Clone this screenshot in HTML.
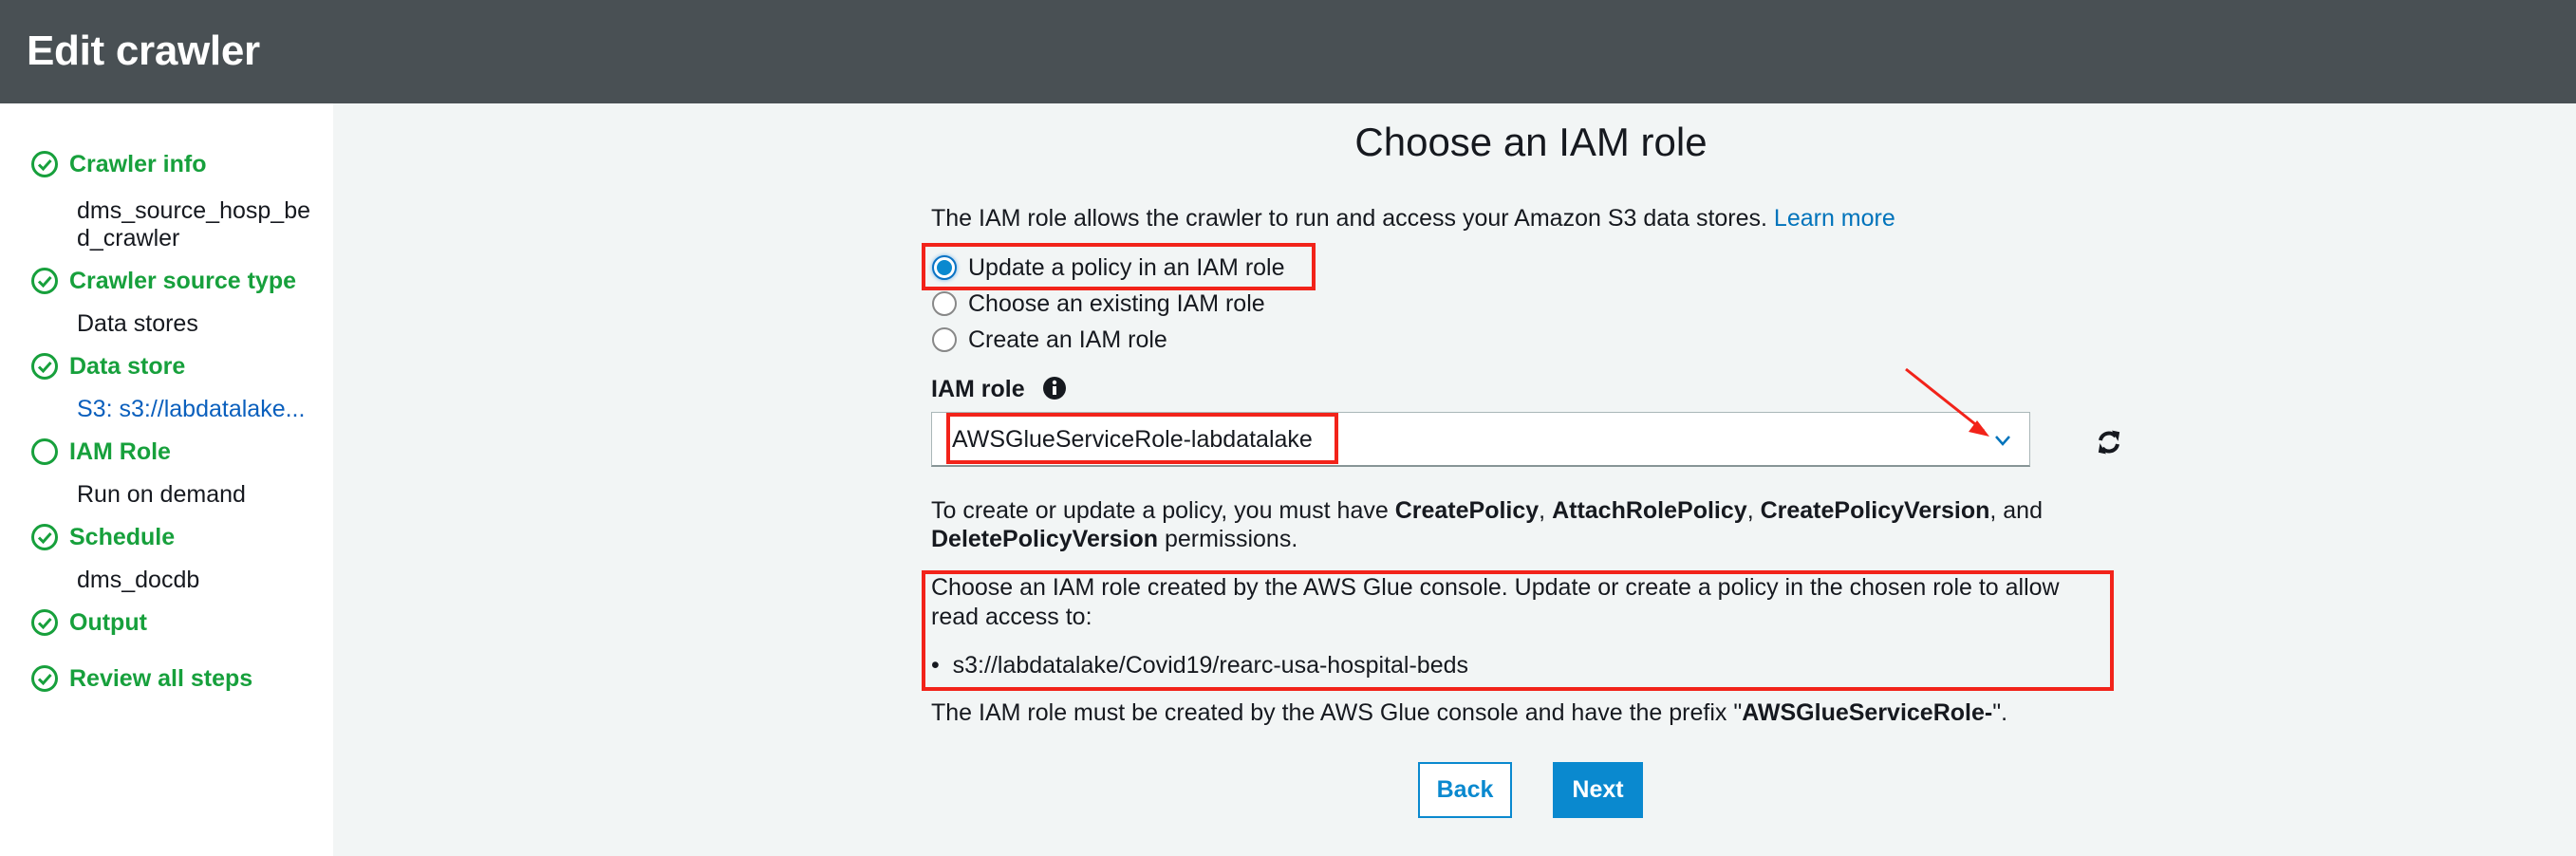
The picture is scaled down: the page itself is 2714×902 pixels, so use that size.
<!DOCTYPE html>
<html><head><meta charset="utf-8"><style>
*{margin:0;padding:0;box-sizing:border-box}
body{width:2714px;height:902px;overflow:hidden;font-family:"Liberation Sans",Arial,sans-serif;background:#f2f5f5;color:#16191f;position:relative}
.hdr{position:absolute;left:0;top:0;width:2714px;height:109px;background:#495054}
.hdr h1{position:absolute;left:28px;top:29px;font-size:44px;color:#fff;font-weight:bold;letter-spacing:-0.3px}
.side{position:absolute;left:0;top:109px;width:351px;height:793px;background:#fff}
.a{position:absolute;white-space:nowrap;font-size:25px;line-height:30px}
.g{color:#17a03c;font-weight:bold;left:73px}
.s{left:81px;color:#16191f}
.ic{position:absolute;left:32px;width:30px;height:30px}
.t{position:absolute;white-space:nowrap;font-size:25px;line-height:30px;left:981px}
b{font-weight:bold}
.rb{position:absolute;border:4px solid #f2231a}
.radio{position:absolute;left:982px;width:26px;height:26px;border-radius:50%;border:2px solid #888;background:#fff}
</style></head><body>
<div class="hdr"><h1>Edit crawler</h1></div>
<div class="side"></div>
<svg class="ic" style="top:158px" viewBox="0 0 30 30"><circle cx="15" cy="15" r="12.5" fill="none" stroke="#17a03c" stroke-width="3"/><path d="M9 15.5l4.5 4.5 8-9" fill="none" stroke="#17a03c" stroke-width="3"/></svg>
<div class="a g" style="top:158px">Crawler info</div>
<div class="a s" style="top:207px">dms_source_hosp_be</div>
<div class="a s" style="top:236px">d_crawler</div>
<svg class="ic" style="top:281px" viewBox="0 0 30 30"><circle cx="15" cy="15" r="12.5" fill="none" stroke="#17a03c" stroke-width="3"/><path d="M9 15.5l4.5 4.5 8-9" fill="none" stroke="#17a03c" stroke-width="3"/></svg>
<div class="a g" style="top:281px">Crawler source type</div>
<div class="a s" style="top:326px">Data stores</div>
<svg class="ic" style="top:371px" viewBox="0 0 30 30"><circle cx="15" cy="15" r="12.5" fill="none" stroke="#17a03c" stroke-width="3"/><path d="M9 15.5l4.5 4.5 8-9" fill="none" stroke="#17a03c" stroke-width="3"/></svg>
<div class="a g" style="top:371px">Data store</div>
<div class="a s" style="top:416px;color:#0a5fbd">S3: s3://labdatalake...</div>
<svg class="ic" style="top:461px" viewBox="0 0 30 30"><circle cx="15" cy="15" r="12.5" fill="none" stroke="#17a03c" stroke-width="3"/></svg>
<div class="a g" style="top:461px">IAM Role</div>
<div class="a s" style="top:506px">Run on demand</div>
<svg class="ic" style="top:551px" viewBox="0 0 30 30"><circle cx="15" cy="15" r="12.5" fill="none" stroke="#17a03c" stroke-width="3"/><path d="M9 15.5l4.5 4.5 8-9" fill="none" stroke="#17a03c" stroke-width="3"/></svg>
<div class="a g" style="top:551px">Schedule</div>
<div class="a s" style="top:596px">dms_docdb</div>
<svg class="ic" style="top:641px" viewBox="0 0 30 30"><circle cx="15" cy="15" r="12.5" fill="none" stroke="#17a03c" stroke-width="3"/><path d="M9 15.5l4.5 4.5 8-9" fill="none" stroke="#17a03c" stroke-width="3"/></svg>
<div class="a g" style="top:641px">Output</div>
<svg class="ic" style="top:700px" viewBox="0 0 30 30"><circle cx="15" cy="15" r="12.5" fill="none" stroke="#17a03c" stroke-width="3"/><path d="M9 15.5l4.5 4.5 8-9" fill="none" stroke="#17a03c" stroke-width="3"/></svg>
<div class="a g" style="top:700px">Review all steps</div>

<div style="position:absolute;left:1313px;width:600px;top:126px;text-align:center;font-size:42px;color:#16191f">Choose an IAM role</div>
<div class="t" style="top:215px">The IAM role allows the crawler to run and access your Amazon S3 data stores. <span style="color:#0073bb">Learn more</span></div>
<div class="radio" style="top:269px;border:2px solid #0a73c4;box-shadow:0 0 4px #6ab0e8"><div style="position:absolute;left:3px;top:3px;width:16px;height:16px;border-radius:50%;background:#0a89cf"></div></div>
<div class="t" style="top:267px;left:1020px">Update a policy in an IAM role</div>
<div class="rb" style="left:971px;top:256px;width:415px;height:50px"></div>
<div class="radio" style="top:307px"></div>
<div class="t" style="top:305px;left:1020px">Choose an existing IAM role</div>
<div class="radio" style="top:345px"></div>
<div class="t" style="top:343px;left:1020px">Create an IAM role</div>
<div class="t" style="top:395px;font-weight:bold">IAM role</div>
<svg style="position:absolute;left:1098px;top:396px" width="26" height="26" viewBox="0 0 26 26"><circle cx="13" cy="13" r="12" fill="#16191f"/><rect x="11" y="11" width="4" height="9" fill="#fff"/><circle cx="13" cy="7" r="2.2" fill="#fff"/></svg>
<div style="position:absolute;left:981px;top:434px;width:1158px;height:58px;background:#fff;border:1px solid #aab7b8;border-bottom:2px solid #879596"></div>
<div class="t" style="top:448px;left:1003px">AWSGlueServiceRole-labdatalake</div>
<div class="rb" style="left:997px;top:435px;width:413px;height:54px"></div>
<svg style="position:absolute;left:2100px;top:457px" width="20" height="14" viewBox="0 0 20 14"><path d="M3 3l7 8 7-8" fill="none" stroke="#0073bb" stroke-width="2.5"/></svg>
<svg style="position:absolute;left:2208px;top:452px" width="28" height="28" viewBox="0 0 28 28"><path d="M5 12A9 9 0 0 1 21 8M23 16A9 9 0 0 1 7 20" fill="none" stroke="#16191f" stroke-width="4"/><path d="M19 3l5 1-1 6z M9 25l-5-1 1-6z" fill="#16191f" stroke="#16191f" stroke-width="2"/></svg>
<svg style="position:absolute;left:2000px;top:380px" width="110" height="90"><line x1="8" y1="9" x2="90" y2="74" stroke="#f2231a" stroke-width="3"/><path d="M96 80l-22-5 9-12z" fill="#f2231a"/></svg>
<div class="t" style="top:523px">To create or update a policy, you must have <b>CreatePolicy</b>, <b>AttachRolePolicy</b>, <b>CreatePolicyVersion</b>, and</div>
<div class="t" style="top:553px"><b>DeletePolicyVersion</b> permissions.</div>
<div class="rb" style="left:971px;top:601px;width:1256px;height:127px"></div>
<div class="t" style="top:604px">Choose an IAM role created by the AWS Glue console. Update or create a policy in the chosen role to allow</div>
<div class="t" style="top:635px">read access to:</div>
<div class="t" style="top:686px">•&nbsp; s3://labdatalake/Covid19/rearc-usa-hospital-beds</div>
<div class="t" style="top:736px">The IAM role must be created by the AWS Glue console and have the prefix "<b>AWSGlueServiceRole-</b>".</div>
<div style="position:absolute;left:1494px;top:803px;width:99px;height:59px;border:2px solid #0a89cf;background:#fff;color:#0a89cf;font-weight:bold;font-size:25px;text-align:center;line-height:55px">Back</div>
<div style="position:absolute;left:1636px;top:803px;width:95px;height:59px;background:#0a89cf;color:#fff;font-weight:bold;font-size:25px;text-align:center;line-height:59px">Next</div>
</body></html>
